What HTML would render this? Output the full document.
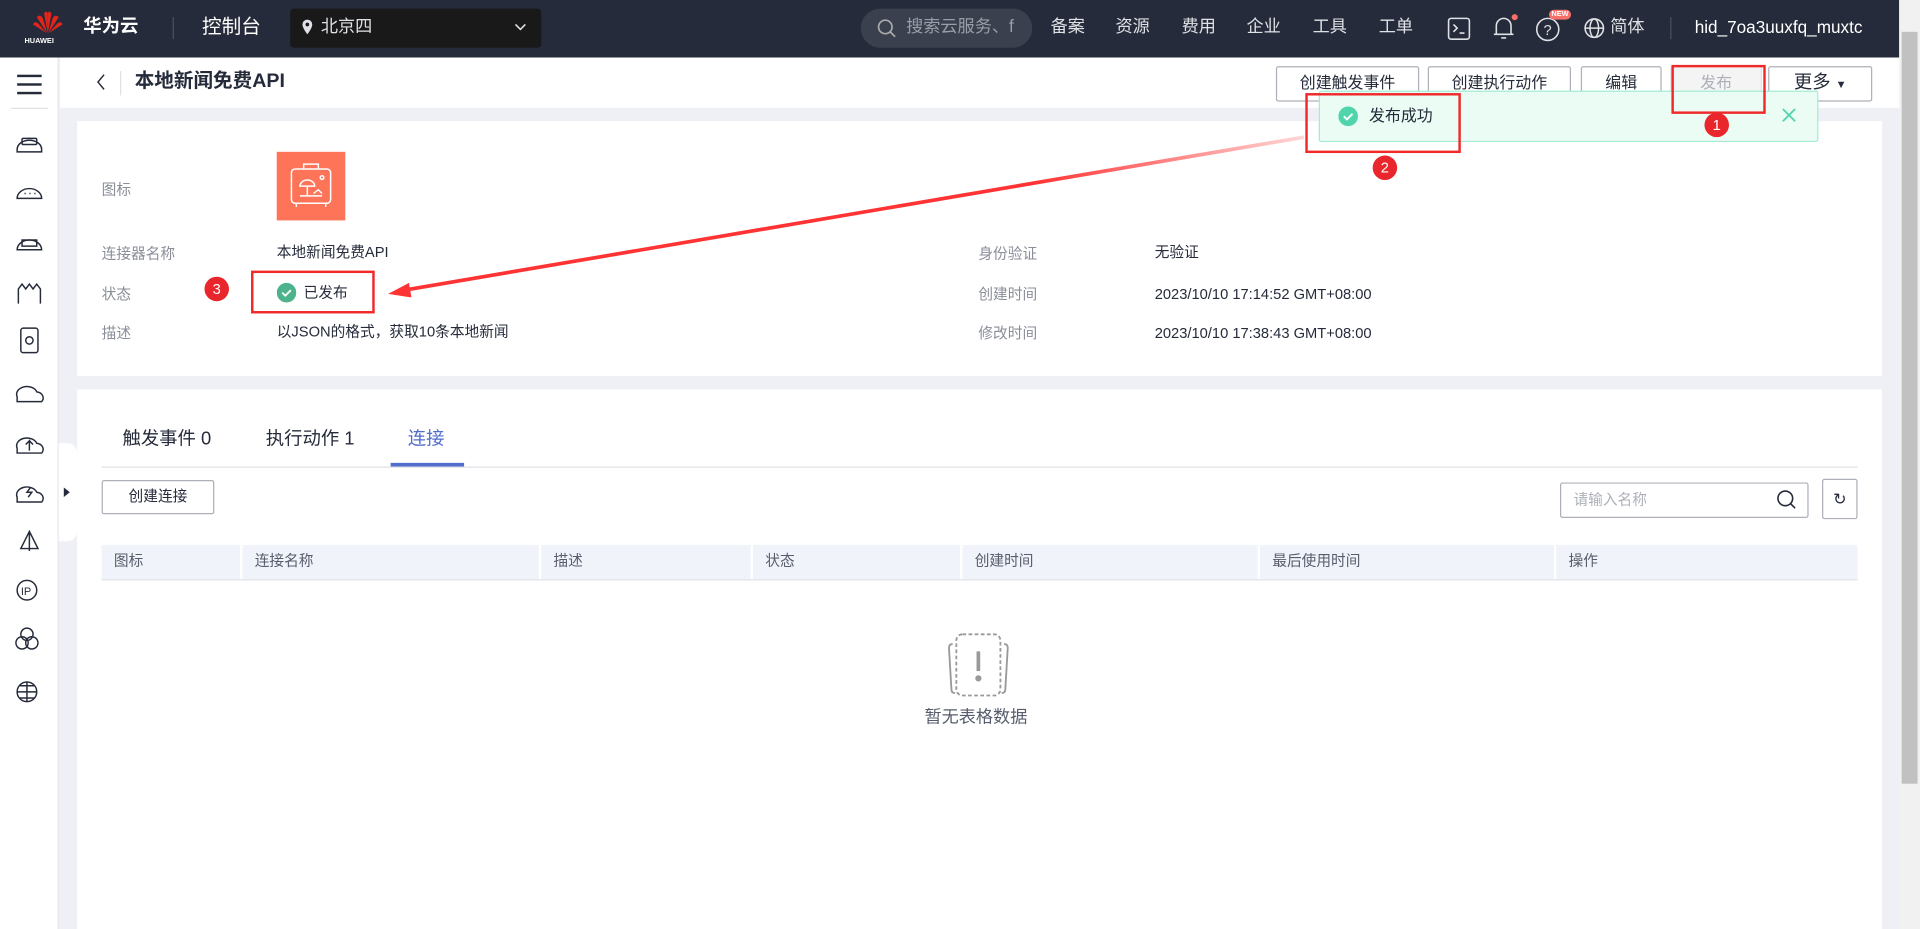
<!DOCTYPE html>
<html><head><meta charset="utf-8"><style>
*{box-sizing:border-box;margin:0;padding:0}
html,body{width:1920px;height:929px;overflow:hidden;background:#eff0f5}
body{font-family:"Liberation Sans","Noto Sans CJK SC",sans-serif;font-size:13px;color:#252b3a;line-height:1.35}
#w{position:absolute;left:0;top:0;width:1568px;height:759px;transform:scale(1.22449);transform-origin:0 0;overflow:hidden;background:#eff0f5}
.a{position:absolute}
.top{left:0;top:0;width:1551px;height:47px;background:#252b3a;color:#dfe1e6}
.btn{position:absolute;top:54px;height:29px;border:1px solid #adb0b8;background:#fff;border-radius:2px;font-size:13px;text-align:center;line-height:26px;color:#252b3a}
.lbl{position:absolute;color:#8a8e99;font-size:12px}
.val{position:absolute;color:#252b3a;font-size:12px}
.th{position:absolute;top:445px;height:28px;background:#f0f3fa;font-size:12px;line-height:27px;padding-left:10px;color:#575d6c;border-right:2px solid #fff}
.rb{position:absolute;border:2px solid #f0292b}
.rc{position:absolute;width:20px;height:20px;border-radius:50%;background:#e8262b;color:#fff;font-size:12px;text-align:center;line-height:20px}
</style></head><body><div id="w">
<div class="a top">
  <svg class="a" style="left:25px;top:7px" width="28" height="22" viewBox="0 0 28 22"><g fill="#e1251b"><path d="M14 20 L11 4 Q13 1 14 4Z"/><path d="M14 20 L17 4 Q15 1 14 4Z"/><path d="M13.5 20 L5 7 Q8 4 10 8Z"/><path d="M14.5 20 L23 7 Q20 4 18 8Z"/><path d="M13 20 L2 13 Q3 10 6 12Z"/><path d="M15 20 L26 13 Q25 10 22 12Z"/></g></svg>
  <div class="a" style="left:20px;top:30px;font-size:6px;color:#fff;font-weight:bold">HUAWEI</div>
  <div class="a" style="left:68px;top:12px;font-size:15px;color:#fff;font-weight:bold">华为云</div>
  <div class="a" style="left:141px;top:14px;width:1px;height:18px;background:#4a505e"></div>
  <div class="a" style="left:165px;top:12px;font-size:16px;color:#fff">控制台</div>
  <div class="a" style="left:237px;top:7px;width:205px;height:32px;background:#191919;border-radius:3px"></div>
  <svg class="a" style="left:246px;top:15px" width="10" height="14"><path d="M5 1a4 4 0 0 1 4 4c0 3-4 8-4 8S1 8 1 5a4 4 0 0 1 4-4z" fill="#dfe1e6"/><circle cx="5" cy="5" r="1.5" fill="#191919"/></svg>
  <div class="a" style="left:262px;top:12px;font-size:14px">北京四</div>
  <svg class="a" style="left:420px;top:18px" width="10" height="8"><path d="M1 2l4 4 4-4" stroke="#dfe1e6" fill="none" stroke-width="1.3"/></svg>
  <div class="a" style="left:703px;top:7px;width:140px;height:32px;background:#3a404e;border-radius:16px"></div>
  <svg class="a" style="left:716px;top:15px" width="16" height="16"><circle cx="7" cy="7" r="5.5" stroke="#aaa" fill="none" stroke-width="1.4"/><path d="M11 11l4 4" stroke="#aaa" stroke-width="1.4"/></svg>
  <div class="a" style="left:740px;top:12px;font-size:14px;color:#9a9ea8">搜索云服务、f</div>
  <div class="a" style="left:858px;top:12px;font-size:14px">备案</div>
  <div class="a" style="left:911px;top:12px;font-size:14px">资源</div>
  <div class="a" style="left:965px;top:12px;font-size:14px">费用</div>
  <div class="a" style="left:1018px;top:12px;font-size:14px">企业</div>
  <div class="a" style="left:1072px;top:12px;font-size:14px">工具</div>
  <div class="a" style="left:1126px;top:12px;font-size:14px">工单</div>
  <svg class="a" style="left:1182px;top:14px" width="20" height="20"><rect x="1" y="1" width="17" height="17" rx="2" stroke="#dfe1e6" fill="none" stroke-width="1.3"/><path d="M5 6l3 3-3 3M10 13h4" stroke="#dfe1e6" fill="none" stroke-width="1.3"/></svg>
  <svg class="a" style="left:1218px;top:11px" width="22" height="24"><path d="M4 17V10a6 6 0 0 1 12 0v7zM2 17h16M8 20h4" stroke="#dfe1e6" fill="none" stroke-width="1.3"/><circle cx="19" cy="3" r="2.5" fill="#f66f6a"/></svg>
  <svg class="a" style="left:1254px;top:13px" width="22" height="22"><circle cx="10" cy="11" r="9" stroke="#dfe1e6" fill="none" stroke-width="1.3"/><text x="6.5" y="15.5" font-size="12" fill="#dfe1e6">?</text></svg>
  <div class="a" style="left:1265px;top:8px;background:#f66f6a;color:#fff;font-size:6px;border-radius:6px;padding:1px 2px;font-weight:bold;line-height:1">NEW</div>
  <svg class="a" style="left:1293px;top:14px" width="18" height="18"><circle cx="9" cy="9" r="7.5" stroke="#dfe1e6" fill="none" stroke-width="1.3"/><ellipse cx="9" cy="9" rx="3.5" ry="7.5" stroke="#dfe1e6" fill="none" stroke-width="1.2"/><path d="M1.5 9h15" stroke="#dfe1e6" stroke-width="1.2"/></svg>
  <div class="a" style="left:1315px;top:12px;font-size:14px">简体</div>
  <div class="a" style="left:1364px;top:14px;width:1px;height:18px;background:#4a505e"></div>
  <div class="a" style="left:1384px;top:13px;font-size:14px;color:#fff">hid_7oa3uuxfq_muxtc</div>
</div>
<div class="a" style="left:1551px;top:0;width:17px;height:759px;background:#f1f1f1"></div>
<div class="a" style="left:1553px;top:26px;width:13px;height:614px;background:#c1c1c1"></div>
<div class="a" style="left:0;top:47px;width:48px;height:712px;background:#fff;border-right:1px solid #e5e6eb"></div>
<div class="a" style="left:14px;top:61px;width:20px;height:2px;background:#252b3a;box-shadow:0 7px 0 #252b3a,0 14px 0 #252b3a"></div>
<div class="a" style="left:9px;top:88px;width:30px;height:1px;background:#dfe1e6"></div>
<svg class="a" style="left:0;top:100px" width="48" height="480" fill="none" stroke="#252b3a" stroke-width="1.2">
<path d="M14 22a8 6 0 0 1 20 0v2H14z"/><rect x="18" y="13" width="12" height="5" rx="1"/>
<path d="M14 62a10 8 0 0 1 20 0z"/><path d="M20 58h1M24 58h1M28 58h1"/>
<path d="M14 104a10 8 0 0 1 20 0z"/><rect x="18" y="96" width="12" height="5"/>
<path d="M15 148v-12l3-4 3 4 3-4 3 4 3-4 3 4v12"/>
<rect x="17" y="168" width="14" height="20" rx="2"/><circle cx="24" cy="178" r="3"/>
<path d="M14 224a8 6 0 0 1 16-4a6 5 0 0 1 4 8H14z"/>
<path d="M14 266a8 6 0 0 1 16-4a6 5 0 0 1 4 8H14z"/><path d="M24 268v-8l-3 3M24 260l3 3"/>
<path d="M14 306a8 6 0 0 1 16-4a6 5 0 0 1 4 8H14z"/><path d="M25 298l-3 4h4l-3 4"/>
<path d="M24 334l-7 14h14z M24 334v16"/>
<circle cx="22" cy="382" r="8"/><text x="17" y="386" font-size="9" stroke="none" fill="#252b3a">IP</text>
<circle cx="22" cy="418" r="5"/><circle cx="18" cy="425" r="5"/><circle cx="26" cy="425" r="5"/>
<circle cx="22" cy="465" r="8"/><path d="M14 465h16M22 457v16M16 460h12M16 470h12"/>
</svg>
<div class="a" style="left:48px;top:362px;width:15px;height:80px;background:#fff;border-radius:0 8px 8px 0"></div>
<svg class="a" style="left:52px;top:398px" width="6" height="8"><path d="M0 0l5 4-5 4z" fill="#252b3a"/></svg>
<div class="a" style="left:49px;top:47px;width:1502px;height:41px;background:#fff"></div>
<svg class="a" style="left:78px;top:59px" width="10" height="16"><path d="M7 2L2 8l5 6" stroke="#252b3a" fill="none" stroke-width="1.2"/></svg>
<div class="a" style="left:98px;top:58px;width:1px;height:20px;background:#dfe1e6"></div>
<div class="a" style="left:110px;top:56px;font-size:16px;font-weight:bold">本地新闻免费API</div>
<div class="btn" style="left:1042px;width:117px">创建触发事件</div>
<div class="btn" style="left:1166px;width:117px">创建执行动作</div>
<div class="btn" style="left:1291px;width:66px">编辑</div>
<div class="btn" style="left:1364px;width:75px;background:#f4f4f4;border-color:#dfe1e6;color:#adb0b8">发布</div>
<div class="btn" style="left:1444px;width:85px;font-size:15px">更多 <span style="font-size:9px">▼</span></div>
<div class="a" style="left:63px;top:99px;width:1474px;height:208px;background:#fff"></div>
<div class="lbl" style="left:83px;top:147px">图标</div>
<div class="a" style="left:226px;top:124px;width:56px;height:56px;background:#fe7458"></div>
<svg class="a" style="left:226px;top:124px" width="56" height="56" fill="none" stroke="#fff" stroke-width="1.2"><rect x="12" y="14" width="32" height="28" rx="3"/><path d="M22 14v-4h12v4M16 42v3M40 42v3M19 36h18M25 36v-8M19 28a6 5 0 0 1 12 0z"/><circle cx="37" cy="21" r="1.5"/><path d="M30 34l4-3 3 3"/></svg>
<div class="lbl" style="left:83px;top:199px">连接器名称</div>
<div class="val" style="left:226px;top:198px">本地新闻免费API</div>
<div class="lbl" style="left:83px;top:232px">状态</div>
<svg class="a" style="left:226px;top:231px" width="16" height="16"><circle cx="8" cy="8" r="8" fill="#4db38c"/><path d="M4.5 8l2.5 2.5 4.5-4.5" stroke="#fff" fill="none" stroke-width="1.5"/></svg>
<div class="val" style="left:248px;top:231px">已发布</div>
<div class="lbl" style="left:83px;top:264px">描述</div>
<div class="val" style="left:226px;top:263px">以JSON的格式，获取10条本地新闻</div>
<div class="lbl" style="left:799px;top:199px">身份验证</div>
<div class="val" style="left:943px;top:198px">无验证</div>
<div class="lbl" style="left:799px;top:232px">创建时间</div>
<div class="val" style="left:943px;top:232px">2023/10/10 17:14:52 GMT+08:00</div>
<div class="lbl" style="left:799px;top:264px">修改时间</div>
<div class="val" style="left:943px;top:264px">2023/10/10 17:38:43 GMT+08:00</div>
<div class="a" style="left:63px;top:318px;width:1474px;height:441px;background:#fff"></div>
<div class="a" style="left:100px;top:349px;font-size:15px">触发事件 0</div>
<div class="a" style="left:217px;top:349px;font-size:15px">执行动作 1</div>
<div class="a" style="left:333px;top:349px;font-size:15px;color:#526ecc">连接</div>
<div class="a" style="left:83px;top:381px;width:1434px;height:1px;background:#dfe1e6"></div>
<div class="a" style="left:319px;top:378px;width:60px;height:3px;background:#526ecc"></div>
<div class="a" style="left:83px;top:392px;width:92px;height:28px;border:1px solid #adb0b8;border-radius:2px;text-align:center;line-height:25px;font-size:12px">创建连接</div>
<div class="a" style="left:1274px;top:394px;width:203px;height:29px;border:1px solid #adb0b8;border-radius:2px;font-size:12px;color:#adb0b8;line-height:26px;padding-left:10px">请输入名称</div>
<svg class="a" style="left:1450px;top:399px" width="18" height="18"><circle cx="8" cy="8" r="6" stroke="#252b3a" fill="none" stroke-width="1.3"/><path d="M12 12l4 4" stroke="#252b3a" stroke-width="1.3"/></svg>
<div class="a" style="left:1488px;top:391px;width:29px;height:33px;border:1px solid #adb0b8;border-radius:2px;text-align:center;line-height:31px;font-size:13px">↻</div>
<div class="th" style="left:83px;width:115px">图标</div>
<div class="th" style="left:198px;width:244px">连接名称</div>
<div class="th" style="left:442px;width:173px">描述</div>
<div class="th" style="left:615px;width:171px">状态</div>
<div class="th" style="left:786px;width:243px">创建时间</div>
<div class="th" style="left:1029px;width:242px">最后使用时间</div>
<div class="th" style="left:1271px;width:246px;border:none">操作</div>
<div class="a" style="left:83px;top:473px;width:1434px;height:1px;background:#dfe1e6"></div>
<svg class="a" style="left:770px;top:514px" width="58" height="58" fill="none" stroke="#999" stroke-width="1.5"><path d="M8 12q-3 0-3 3l2 34q0 3 3 3M50 12q3 0 3 3l-2 34q0 3-3 3"/><rect x="11" y="4" width="36" height="50" rx="5" stroke-dasharray="3 2"/><path d="M29 18v16" stroke-width="3"/><circle cx="29" cy="40" r="1.8" fill="#999"/></svg>
<div class="a" style="left:755px;top:576px;font-size:14px;color:#575d6c">暂无表格数据</div>
<div class="a" style="left:1077px;top:74px;width:408px;height:42px;background:#ebfcf5;border:1px solid #a3ecd4;border-radius:2px"></div>
<svg class="a" style="left:1093px;top:87px" width="16" height="16"><circle cx="8" cy="8" r="8" fill="#50d4ab"/><path d="M4.5 8l2.5 2.5 4.5-4.5" stroke="#fff" fill="none" stroke-width="1.6"/></svg>
<div class="a" style="left:1118px;top:86px;font-size:13px;color:#252b3a">发布成功</div>
<svg class="a" style="left:1455px;top:88px" width="12" height="12"><path d="M1 1l10 10M11 1L1 11" stroke="#50d4ab" stroke-width="1.5"/></svg>
<div class="rb" style="left:1365px;top:53px;width:77px;height:40px"></div>
<div class="rb" style="left:1066px;top:76px;width:127px;height:49px"></div>
<div class="rb" style="left:205px;top:221px;width:101px;height:35px"></div>
<div class="rc" style="left:1392px;top:92px">1</div>
<div class="rc" style="left:1121px;top:127px">2</div>
<div class="rc" style="left:167px;top:226px">3</div>
<svg class="a" style="left:0;top:0" width="1568" height="759"><defs><linearGradient id="g" x1="1065" y1="112" x2="330" y2="238" gradientUnits="userSpaceOnUse"><stop offset="0" stop-color="#f33" stop-opacity="0.2"/><stop offset="0.3" stop-color="#f33"/><stop offset="1" stop-color="#f33"/></linearGradient></defs><path d="M1065 112L330 237" stroke="url(#g)" stroke-width="3"/><path d="M317 240l17-9 2 12z" fill="#f33"/></svg>
</div></body></html>
